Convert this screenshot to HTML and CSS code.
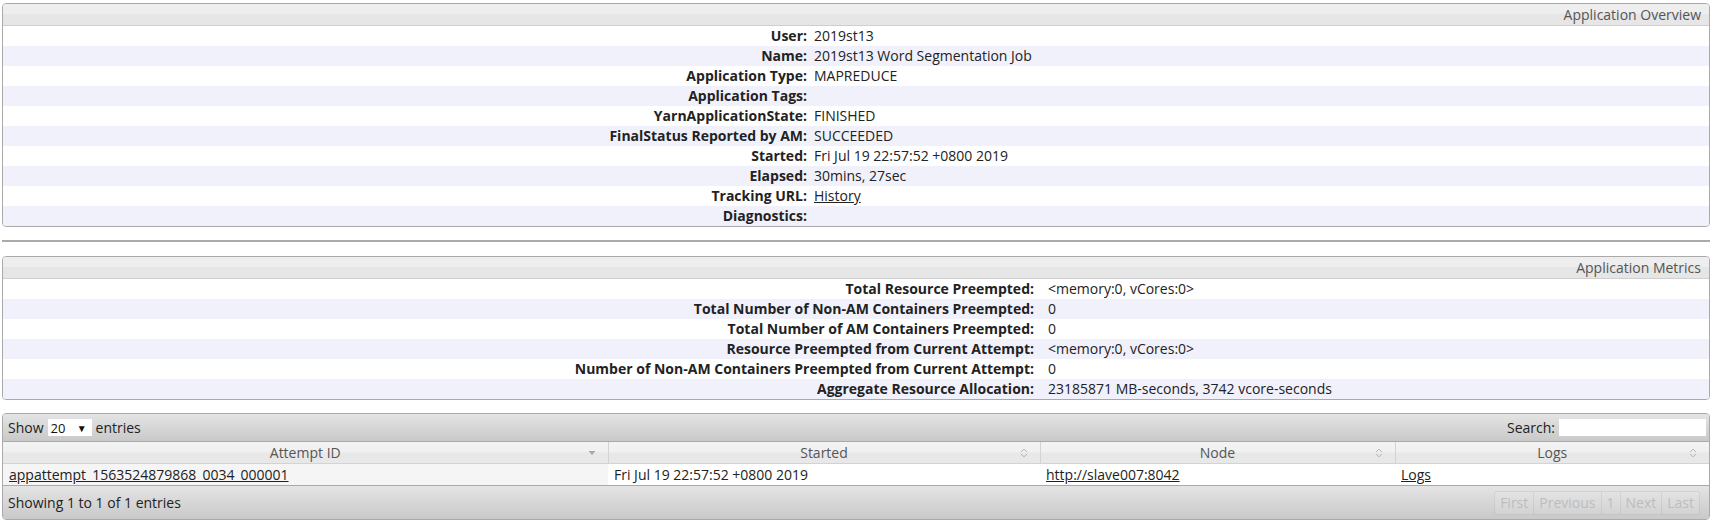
FILE: index.html
```html
<!DOCTYPE html>
<html>
<head>
<meta charset="utf-8">
<title>Application</title>
<link rel="stylesheet" href="styles.css">
</head>
<body>
<div class="page">
  <div class="box">
    <div class="box-head">Application Overview</div>
    <table class="info overview">
      <tr><th>User:</th><td>2019st13</td></tr>
      <tr><th>Name:</th><td>2019st13 Word Segmentation Job</td></tr>
      <tr><th>Application Type:</th><td>MAPREDUCE</td></tr>
      <tr><th>Application Tags:</th><td></td></tr>
      <tr><th>YarnApplicationState:</th><td>FINISHED</td></tr>
      <tr><th>FinalStatus Reported by AM:</th><td>SUCCEEDED</td></tr>
      <tr><th>Started:</th><td>Fri Jul 19 22:57:52 +0800 2019</td></tr>
      <tr><th>Elapsed:</th><td>30mins, 27sec</td></tr>
      <tr><th>Tracking URL:</th><td><a href="#">History</a></td></tr>
      <tr><th>Diagnostics:</th><td></td></tr>
    </table>
  </div>

  <hr class="sep">

  <div class="box">
    <div class="box-head">Application Metrics</div>
    <table class="info metrics">
      <tr><th>Total Resource Preempted:</th><td>&lt;memory:0, vCores:0&gt;</td></tr>
      <tr><th>Total Number of Non-AM Containers Preempted:</th><td>0</td></tr>
      <tr><th>Total Number of AM Containers Preempted:</th><td>0</td></tr>
      <tr><th>Resource Preempted from Current Attempt:</th><td>&lt;memory:0, vCores:0&gt;</td></tr>
      <tr><th>Number of Non-AM Containers Preempted from Current Attempt:</th><td>0</td></tr>
      <tr><th>Aggregate Resource Allocation:</th><td>23185871 MB-seconds, 3742 vcore-seconds</td></tr>
    </table>
  </div>

  <div class="grid">
    <div class="toolbar top">
      <div class="length">Show <span class="select"><span>20</span><span class="arrow">&#9660;</span></span> entries</div>
      <div class="search">Search: <span class="input"></span></div>
    </div>
    <table class="attempts">
      <colgroup>
        <col class="c1"><col class="c2"><col class="c3"><col class="c4">
      </colgroup>
      <thead>
        <tr>
          <th><div class="th-in">Attempt ID<svg class="sort" width="8" height="5" viewBox="0 0 8 5"><path d="M0.5 0.5 L7.5 0.5 L4 4.5 Z" fill="#a8a8a8"/></svg></div></th>
          <th><div class="th-in">Started<svg class="sort" width="8" height="10" viewBox="0 0 8 10"><path d="M1 4 L4 1.2 L7 4 M1 6 L4 8.8 L7 6" fill="none" stroke="#b4b4b4" stroke-width="1"/></svg></div></th>
          <th><div class="th-in">Node<svg class="sort" width="8" height="10" viewBox="0 0 8 10"><path d="M1 4 L4 1.2 L7 4 M1 6 L4 8.8 L7 6" fill="none" stroke="#b4b4b4" stroke-width="1"/></svg></div></th>
          <th class="last"><div class="th-in">Logs<svg class="sort" width="8" height="10" viewBox="0 0 8 10"><path d="M1 4 L4 1.2 L7 4 M1 6 L4 8.8 L7 6" fill="none" stroke="#b4b4b4" stroke-width="1"/></svg></div></th>
        </tr>
      </thead>
      <tbody>
        <tr>
          <td class="sorted"><a href="#">appattempt_1563524879868_0034_000001</a></td>
          <td>Fri Jul 19 22:57:52 +0800 2019</td>
          <td><a href="#">http://slave007:8042</a></td>
          <td><a href="#">Logs</a></td>
        </tr>
      </tbody>
    </table>
    <div class="toolbar bottom">
      <div class="info-text">Showing 1 to 1 of 1 entries</div>
      <div class="pager">
        <span>First</span><span>Previous</span><span>1</span><span>Next</span><span>Last</span>
      </div>
    </div>
  </div>
</div>
</body>
</html>
```

FILE: styles.css
```css
body {
  margin: 0;
  font-family: "Open Sans", "Noto Sans", sans-serif;
  font-size: 14px;
  color: #222;
  background: #fff;
}

a {
  color: #222;
  text-decoration: underline;
}

.page {
  padding: 3px 3px 0 2px;
}

.box {
  border: 1px solid #aaa;
  border-radius: 4px;
  overflow: hidden;
}

.box-head {
  height: 21px;
  line-height: 21px;
  text-align: right;
  padding-right: 8px;
  color: #555;
  background: linear-gradient(#eeeeee 0%, #eeeeee 45%, #e6e6e6 50%, #e6e6e6 100%);
  border-bottom: 1px solid #cfcfcf;
}

.info {
  width: 100%;
  border-collapse: collapse;
  table-layout: fixed;
}

.info tr {
  height: 20px;
}

.info tr:nth-child(even) {
  background: #f1f1fc;
}

.info th {
  text-align: right;
  font-weight: bold;
  padding: 0;
  line-height: 20px;
  white-space: nowrap;
}

.info td {
  padding: 0;
  line-height: 20px;
  white-space: nowrap;
}

.overview th { width: 804px; }
.overview td { padding-left: 7px; }

.metrics th { width: 1031px; }
.metrics td { padding-left: 14px; }

.sep {
  margin: 13px 0 14px;
  border: 0;
  border-top: 2px solid #aaa;
  height: 0;
}

.grid {
  margin-top: 13px;
  border: 1px solid #aaa;
  border-radius: 4px;
  overflow: hidden;
}

.toolbar {
  display: flex;
  align-items: center;
  justify-content: space-between;
  padding: 0 3px 0 5px;
  background: linear-gradient(#e4e4e4, #c9c9c9);
}

.toolbar.top {
  height: 27px;
  border-bottom: 1px solid #aaa;
}

.toolbar.bottom {
  height: 33px;
  border-top: 1px solid #aaa;
}

.length, .search {
  display: flex;
  align-items: center;
}

.select {
  display: inline-flex;
  align-items: center;
  justify-content: space-between;
  box-sizing: border-box;
  width: 44px;
  height: 17px;
  margin: 0 4px;
  padding: 0 5px 0 3px;
  background: #fff;
  font-size: 13px;
  color: #111;
}

.select .arrow {
  font-size: 10px;
  color: #111;
}

.input {
  display: inline-block;
  width: 147px;
  height: 17px;
  margin-left: 4px;
  background: #fff;
}

.attempts {
  width: 100%;
  border-collapse: collapse;
  table-layout: fixed;
}

.attempts col.c1 { width: 605px; }
.attempts col.c2 { width: 432px; }
.attempts col.c3 { width: 355px; }

.attempts th {
  height: 21px;
  padding: 0;
  font-weight: normal;
  color: #555;
  background: linear-gradient(#f3f3f3 0%, #f0f0f0 45%, #e8e8e8 55%, #e8e8e8 100%);
  border-right: 1px solid #d3d3d3;
  border-bottom: 1px solid #d3d3d3;
}

.attempts th.last {
  border-right: 0;
}

.th-in {
  position: relative;
  text-align: center;
  line-height: 21px;
}

.th-in .sort {
  position: absolute;
  right: 12px;
  top: 50%;
  transform: translateY(-50%);
}

.attempts td {
  height: 21px;
  padding: 0 6px;
  white-space: nowrap;
  line-height: 21px;
}

.attempts td.sorted {
  background: #f5f5f5;
}

.pager {
  display: flex;
  height: 22px;
  border: 1px solid rgba(0, 0, 0, 0.07);
  border-radius: 3px;
  background: rgba(255, 255, 255, 0.12);
  margin-right: 6px;
}

.pager span {
  display: flex;
  align-items: center;
  padding: 0 5px;
  color: #bdbdbd;
  border-left: 1px solid rgba(0, 0, 0, 0.06);
}

.pager span:first-child {
  border-left: 0;
}
```
